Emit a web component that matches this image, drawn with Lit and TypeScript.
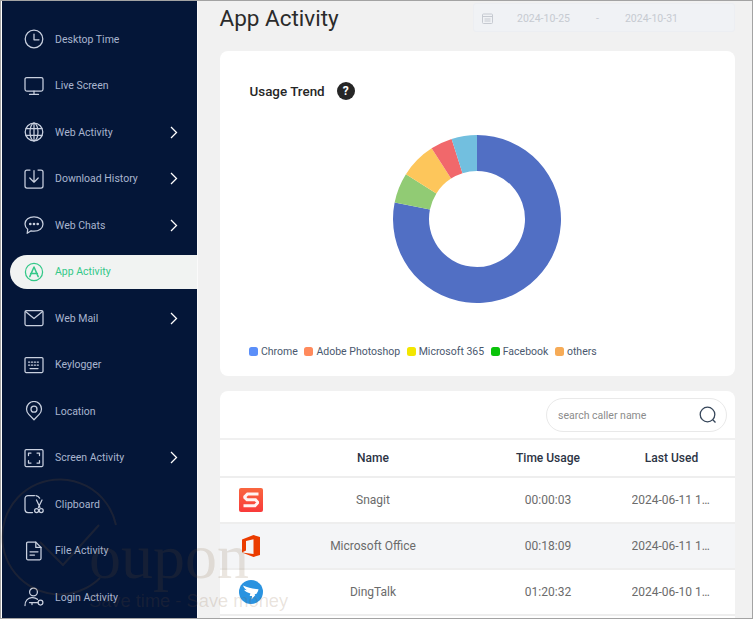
import { LitElement, html, css, svg } from 'lit';
import { customElement } from 'lit/decorators.js';

const ICONS: Record<string, any> = {
  clock: svg`<circle cx="10" cy="10" r="8.8"/><path d="M10 5v5.8h5"/>`,
  monitor: svg`<rect x="1" y="1.5" width="18" height="13.5" rx="1.8"/><path d="M10 15v3M5.5 18.4h9"/>`,
  globe: svg`<circle cx="10" cy="10" r="8.8"/><ellipse cx="10" cy="10" rx="4" ry="8.8"/><path d="M10 1.2v17.6M2 6.6h16M2 13.4h16"/>`,
  download: svg`<path d="M6 1H3a2 2 0 0 0-2 2v14a2 2 0 0 0 2 2h14a2 2 0 0 0 2-2V3a2 2 0 0 0-2-2h-3"/><path d="M10 1.500v11.500M5.800 9l4.200 4.200L14.200 9"/>`,
  chat: svg`<path d="M10 1.800c5 0 9 3 9 7.200s-4 7.200-9 7.200c-1 0-2-.1-2.900-.4L3.200 18.300l.5-4C2 12.900 1 11.100 1 9c0-4.200 4-7.200 9-7.200z"/><circle cx="6.300" cy="9" r=".7" fill="currentColor"/><circle cx="10" cy="9" r=".7" fill="currentColor"/><circle cx="13.700" cy="9" r=".7" fill="currentColor"/>`,
  app: svg`<circle cx="10" cy="10" r="8.600"/><path d="M5.800 14.600L10 5l4.200 9.600M6.600 11.600h6.800" stroke-width="1.500"/>`,
  mail: svg`<rect x="1" y="2.500" width="18" height="15" rx="1.500"/><path d="M1.500 3.500l8.500 7 8.500-7"/>`,
  keyboard: svg`<rect x="1" y="2.500" width="18" height="15" rx="1.200"/><path d="M4.500 7h1.200M7.400 7h1.200M10.300 7h1.200M13.200 7h1.200M4.500 10h1.200M7.400 10h1.200M10.300 10h1.200M13.200 10h1.200M6 13.500h8"/>`,
  pin: svg`<path d="M10 18.800l-5.200-5.400a7.500 7.500 0 1 1 10.400 0z"/><circle cx="10" cy="8.200" r="3"/>`,
  screen: svg`<rect x="1" y="1.500" width="18" height="17" rx="1.200"/><path d="M4.500 7.500V5h2.500M13 5h2.500v2.500M15.500 12.500V15H13M7 15H4.500v-2.500"/>`,
  clip: svg`<path d="M10.500 1.500H4a3 3 0 0 0-3 3v11a3 3 0 0 0 3 3h4.500M12 1.600c1.600.4 2.800 1.200 3.600 2.500"/><path d="M12.500 6l3.500 7.500M18 6l-3.600 7.500"/><circle cx="12.600" cy="16.500" r="2"/><circle cx="17.200" cy="16.500" r="2"/>`,
  file: svg`<path d="M3.800 1.200h8L17 6.400v11.200a1.200 1.200 0 0 1-1.200 1.200H3.800a1.200 1.200 0 0 1-1.200-1.200V2.400a1.200 1.200 0 0 1 1.200-1.200z"/><path d="M11.800 1.200v5.200H17M6 10.800h8M6 14h4.500"/>`,
  login: svg`<circle cx="9.500" cy="5" r="3.900"/><path d="M1 18.500c0-4.600 3-7.400 6.500-7.800 2.300-.3 4.500.4 6 1.600"/><circle cx="16.500" cy="15.600" r="2.400"/><path d="M14 15.600H5.500M8 15.600v2"/>`,
};

const MENU = [
  { label: 'Desktop Time', icon: 'clock' },
  { label: 'Live Screen', icon: 'monitor' },
  { label: 'Web Activity', icon: 'globe', more: true },
  { label: 'Download History', icon: 'download', more: true },
  { label: 'Web Chats', icon: 'chat', more: true },
  { label: 'App Activity', icon: 'app', active: true },
  { label: 'Web Mail', icon: 'mail', more: true },
  { label: 'Keylogger', icon: 'keyboard' },
  { label: 'Location', icon: 'pin' },
  { label: 'Screen Activity', icon: 'screen', more: true },
  { label: 'Clipboard', icon: 'clip' },
  { label: 'File Activity', icon: 'file' },
  { label: 'Login Activity', icon: 'login' },
];

const LEGEND = [
  { name: 'Chrome', color: '#5b8ff9' },
  { name: 'Adobe Photoshop', color: '#ff8a5c' },
  { name: 'Microsoft 365', color: '#f3e600' },
  { name: 'Facebook', color: '#0ac30a' },
  { name: 'others', color: '#f6ab57' },
];

// start/end angles are clockwise from 12 o'clock
const SLICES = [
  { from: 0, to: 281.3, color: '#516fc4' },
  { from: 281.3, to: 302.2, color: '#91cb74' },
  { from: 302.2, to: 327.3, color: '#fdc65b' },
  { from: 327.3, to: 342.4, color: '#f1686b' },
  { from: 342.4, to: 360, color: '#72bfdf' },
];

const APPS = [
  { logo: 'snagit', name: 'Snagit', time: '00:00:03', last: '2024-06-11 14:32:18' },
  { logo: 'office', name: 'Microsoft Office', time: '00:18:09', last: '2024-06-11 14:20:45' },
  { logo: 'dingtalk', name: 'DingTalk', time: '01:20:32', last: '2024-06-10 18:05:27' },
];

function slicePath(from: number, to: number, R: number, r: number, c: number) {
  const pt = (deg: number, rad: number) => {
    const a = (deg * Math.PI) / 180;
    return `${(c + rad * Math.sin(a)).toFixed(2)} ${(c - rad * Math.cos(a)).toFixed(2)}`;
  };
  const large = to - from > 180 ? 1 : 0;
  return `M${pt(from, R)}A${R} ${R} 0 ${large} 1 ${pt(to, R)}L${pt(to, r)}A${r} ${r} 0 ${large} 0 ${pt(from, r)}Z`;
}

const LOGOS: Record<string, any> = {
  snagit: html`<svg width="24" height="24" viewBox="0 0 24 24">
    <defs><linearGradient id="sn" x1="0" y1="0" x2="0" y2="1"><stop offset="0" stop-color="#f9663f"/><stop offset="1" stop-color="#f93a3a"/></linearGradient></defs>
    <rect width="24" height="24" rx="2" fill="url(#sn)"/>
    <path d="M19.500 6H8.500L5.800 8.700v1L8 11.800h8.500l2 2.200v1l-2.500 2.800H4.500" fill="none" stroke="#fff" stroke-opacity=".93" stroke-width="3"/>
  </svg>`,
  office: html`<svg width="18" height="22" viewBox="0 0 18 22">
    <path d="M0 4.500L11.500 0 18 2v18l-6.500 2L0 17.500l11.500 1.500V4.200L4 6v9.500l-4 2z" fill="#eb3c00"/>
  </svg>`,
  dingtalk: html`<svg width="24" height="24" viewBox="0 0 24 24">
    <circle cx="12" cy="12" r="12" fill="#2a93e0"/>
    <path d="M4 5.500c5 2.300 10 3.500 15.500 3.800-.3 1.700-1 3.200-2.200 4.600l-1.800.2.900.9-3.900 4.500.6-3.400-2.400-.2.700-2.400C8.600 12.800 6.200 11.600 5 9.800c1 .3 2 .4 2.800.4C6.300 9 4.800 7.500 4 5.500z" fill="#fff"/>
  </svg>`,
};

@customElement('app-root')
export class AppRoot extends LitElement {
  static styles = css`
    :host {
      display: block;
      width: 753px;
      height: 619px;
      font-family: Roboto, 'Liberation Sans', sans-serif;
    }
    .frame {
      position: relative;
      box-sizing: border-box;
      width: 753px;
      height: 619px;
      border: 1px solid #a3a3a3;
      background: #f1f1f1;
      display: flex;
      overflow: hidden;
    }
    .side {
      flex: none;
      width: 195px;
      margin-left: 1px;
      margin-right: 1px;
      padding-top: 15px;
      background: #041638;
      box-shadow: -1px 0 0 #fff, 1px 0 0 #fafafa;
      display: grid;
      grid-auto-rows: 46.500px;
    }
    .item {
      display: flex;
      align-items: center;
    }
    .pill {
      flex: 1;
      height: 34px;
      margin-left: 7.500px;
      padding: 0 19px 0 14.500px;
      display: flex;
      align-items: center;
      color: #a9b5cf;
      font-size: 10.500px;
      border-radius: 17px 0 0 17px;
    }
    .pill svg.ic {
      flex: none;
      width: 20px;
      height: 20px;
      margin-right: 11px;
      fill: none;
      stroke: #c9d0df;
      stroke-width: 1.250;
      stroke-linejoin: round;
      stroke-linecap: round;
    }
    .pill.on {
      background: #f1f3f2;
      color: #33c888;
    }
    .pill.on svg.ic {
      stroke: #33c888;
    }
    .chev {
      margin-left: auto;
      width: 8px;
      height: 13px;
      fill: none;
      stroke: #fff;
      stroke-width: 1.300;
    }
    .main {
      flex: 1;
      min-width: 0;
      padding: 2px 17px 0 21.500px;
    }
    .top {
      height: 29px;
      display: flex;
      align-items: center;
      justify-content: space-between;
    }
    h1 {
      margin: 1px 0 0;
      font-size: 22.500px;
      font-weight: 400;
      color: #2b2b2b;
    }
    .dates {
      box-sizing: border-box;
      width: 262px;
      height: 29px;
      padding: 1px 0 0 8px;
      display: flex;
      align-items: center;
      background: #f0f2f5;
      border: 1px solid #eceef2;
      border-radius: 3px;
      color: #c6cad1;
      font-size: 10.500px;
    }
    .dates svg {
      width: 11px;
      height: 11px;
      margin-right: 24px;
      fill: none;
      stroke: #c6cad1;
    }
    .dates .dash {
      margin: 0 26px;
    }
    .card {
      background: #fff;
      border-radius: 8px;
    }
    .trend {
      box-sizing: border-box;
      height: 325px;
      margin-top: 18.500px;
      padding: 31.500px 30px 0;
    }
    .trend h2 {
      margin: 0;
      height: 18px;
      display: flex;
      align-items: center;
      font-size: 13.400px;
      font-weight: 500;
      color: #262626;
    }
    .help {
      width: 18px;
      height: 18px;
      margin-left: 12px;
      border-radius: 50%;
      background: #262626;
      color: #fff;
      font-size: 12px;
      font-weight: 700;
      display: flex;
      align-items: center;
      justify-content: center;
    }
    .donut {
      display: block;
      margin: 34px auto 0;
      position: relative;
      left: -0.500px;
    }
    .legend {
      margin: 40.500px 0 0 -0.500px;
      height: 14px;
      display: flex;
      gap: 6.600px;
      font-size: 10.500px;
      color: #4a586e;
    }
    .legend span {
      display: flex;
      align-items: center;
      gap: 3px;
    }
    .legend i {
      width: 9px;
      height: 9px;
      border-radius: 2.500px;
    }
    .table {
      margin-top: 15.500px;
      border-radius: 8px 8px 0 0;
      height: 240px;
    }
    .tools {
      box-sizing: border-box;
      height: 49px;
      padding: 7px 8px 0 0;
      border-bottom: 2px solid #f0f0f0;
      display: flex;
      justify-content: flex-end;
    }
    .search {
      box-sizing: border-box;
      width: 181px;
      height: 34px;
      padding: 0 9px 0 11px;
      border: 1.500px solid #e9e9e9;
      border-radius: 17px;
      display: flex;
      align-items: center;
    }
    .search input {
      flex: 1;
      min-width: 0;
      border: 0;
      padding: 0;
      outline: 0;
      font: 400 10.500px Roboto, sans-serif;
      color: #555;
    }
    .search input::placeholder {
      color: #8b8b8b;
    }
    .search svg {
      width: 18px;
      height: 18px;
      fill: none;
      stroke: #36465a;
      stroke-width: 1.300;
    }
    .row {
      box-sizing: border-box;
      height: 46px;
      display: grid;
      grid-template-columns: 62px 183px 167px 80px;
      align-items: center;
      text-align: center;
      font-size: 12px;
      color: #6b6b6b;
      border-bottom: 2px solid #eeeeee;
    }
    .row.head {
      height: 38px;
      font-weight: 500;
      color: #2c3444;
    }
    .row.alt {
      background: #f4f5f7;
    }
    .logo {
      display: flex;
      justify-content: center;
      padding-left: 1px;
    }
    .last {
      white-space: nowrap;
      overflow: hidden;
      text-overflow: ellipsis;
    }
    .row.head .last {
      overflow: visible;
    }
    .mark {
      position: absolute;
      left: -1px;
      top: -1px;
      pointer-events: none;
    }
    .mark .big {
      font: 64px 'Liberation Serif', serif;
      fill: #7a5532;
      fill-opacity: 0.15;
    }
    .mark .small {
      font: 18.300px 'Liberation Sans', sans-serif;
      fill: #7a5532;
      fill-opacity: 0.17;
    }
  `;

  render() {
    return html`<div class="frame">
      <nav class="side">
        ${MENU.map(
          (m) => html`<div class="item">
            <div class="pill ${m.active ? 'on' : ''}">
              <svg class="ic" viewBox="0 0 20 20">${ICONS[m.icon]}</svg>
              ${m.label}
              ${m.more
                ? html`<svg class="chev" viewBox="0 0 8 13"><path d="M1 1l5.500 5.500L1 12"/></svg>`
                : ''}
            </div>
          </div>`
        )}
      </nav>
      <main class="main">
        <div class="top">
          <h1>App Activity</h1>
          <div class="dates">
            <svg viewBox="0 0 11 11"><rect x=".5" y="1" width="10" height="9.500" rx="1"/><path d="M.5 3.500h10M2.500 6h6M2.500 8h6"/></svg>
            <span>2024-10-25</span><span class="dash">-</span><span>2024-10-31</span>
          </div>
        </div>

        <section class="card trend">
          <h2>Usage Trend<span class="help">?</span></h2>
          <svg class="donut" width="170" height="170" viewBox="0 0 170 170">
            ${SLICES.map(
              (s) => svg`<path d=${slicePath(s.from, s.to - (s.to === 360 ? 0.01 : 0), 84, 48, 85)} fill=${s.color}/>`
            )}
          </svg>
          <div class="legend">
            ${LEGEND.map((l) => html`<span><i style="background:${l.color}"></i>${l.name}</span>`)}
          </div>
        </section>

        <section class="card table">
          <div class="tools">
            <label class="search">
              <input placeholder="search caller name" />
              <svg viewBox="0 0 18 18"><circle cx="8.500" cy="8.500" r="7.300"/><path d="M13.800 13.800l2.700 2.700"/></svg>
            </label>
          </div>
          <div class="row head">
            <span></span><span>Name</span><span>Time Usage</span><span class="last">Last Used</span>
          </div>
          ${APPS.map(
            (a, i) => html`<div class="row ${i === 1 ? 'alt' : ''}">
              <span class="logo">${LOGOS[a.logo]}</span>
              <span>${a.name}</span>
              <span>${a.time}</span>
              <span class="last">${a.last}</span>
            </div>`
          )}
        </section>
      </main>

      <svg class="mark" width="753" height="619" viewBox="0 0 753 619">
        <path d="M100 578A57.500 57.500 0 1 1 116 525" fill="none" stroke="#7a5532" stroke-opacity=".2" stroke-width="2"/>
        <path d="M40 542l23 23 36-40" fill="none" stroke="#7a5532" stroke-opacity=".2" stroke-width="2"/>
        <text class="big" x="89" y="578">oupon</text>
        <text class="small" x="89" y="607">Save time - Save money</text>
      </svg>
    </div>`;
  }
}
